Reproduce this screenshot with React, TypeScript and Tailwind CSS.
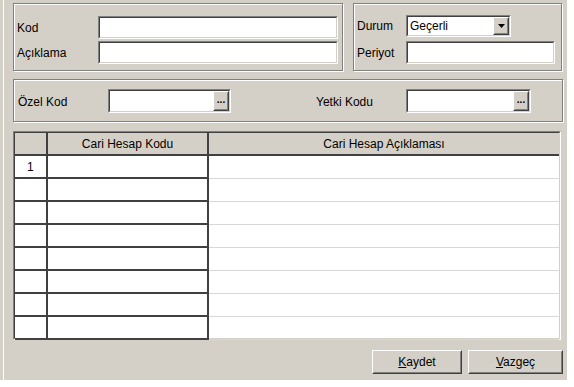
import React from 'react';

const font = { fontFamily: '"Liberation Sans", Arial, sans-serif' };

// Windows-classic sunken edit frame
const Sunken: React.FC<{ className?: string; children?: React.ReactNode }> = ({ className = '', children }) => (
  <div className={`border border-t-[#808080] border-l-[#808080] border-b-white border-r-white ${className}`}>
    <div className="h-full w-full border border-t-[#404040] border-l-[#404040] border-b-[#d4d0c8] border-r-[#d4d0c8] bg-white flex items-center">
      {children}
    </div>
  </div>
);

const Raised: React.FC<{ className?: string; children?: React.ReactNode }> = ({ className = '', children }) => (
  <div className={`border border-t-white border-l-white border-b-[#404040] border-r-[#404040] bg-[#d4d0c8] ${className}`}>
    <div className="h-full w-full border border-t-[#d4d0c8] border-l-[#d4d0c8] border-b-[#808080] border-r-[#808080] flex items-center justify-center">
      {children}
    </div>
  </div>
);

const Group: React.FC<{ className?: string; children?: React.ReactNode }> = ({ className = '', children }) => (
  <div className={`border border-[#808080] shadow-[inset_1px_1px_0_#fff,1px_1px_0_#fff] ${className}`}>{children}</div>
);

const Lookup: React.FC<{ className?: string }> = ({ className = '' }) => (
  <Sunken className={className}>
    <div className="flex-1" />
    <Raised className="w-[16px] h-full">
      <span className="text-[10px] font-bold leading-none -mt-[3px]">...</span>
    </Raised>
  </Sunken>
);

const rows = Array.from({ length: 8 }, (_, i) => i);

export default function App() {
  return (
    <div className="w-[574px] h-[387px] bg-white text-[12px] text-black" style={font}>
      <div className="w-[567px] h-[380px] bg-[#d4d0c8] pl-[3px]">
        <div className="h-full border-l border-white pl-[9px] pt-[3px] flex flex-col">
          {/* top groups */}
          <div className="flex gap-[10px]">
            <Group className="w-[330px] h-[68px] pl-[3px] pt-[12px] pr-[4px] flex flex-col gap-[2px]">
              <div className="flex items-center">
                <span className="w-[81px]">Kod</span>
                <Sunken className="w-[240px] h-[23px]" />
              </div>
              <div className="flex items-center">
                <span className="w-[81px]">Açıklama</span>
                <Sunken className="w-[240px] h-[23px]" />
              </div>
            </Group>
            <Group className="w-[209px] h-[68px] pl-[3px] pt-[11px] flex flex-col gap-[4px]">
              <div className="flex items-center">
                <span className="w-[49px]">Durum</span>
                <Sunken className="w-[105px] h-[22px]">
                  <span className="flex-1 pl-[2px]">Geçerli</span>
                  <Raised className="w-[16px] h-full">
                    <svg width="7" height="4" viewBox="0 0 7 4"><path d="M0 0h7L3.5 4z" fill="#000" /></svg>
                  </Raised>
                </Sunken>
              </div>
              <div className="flex items-center">
                <span className="w-[49px]">Periyot</span>
                <Sunken className="w-[149px] h-[23px]" />
              </div>
            </Group>
          </div>

          {/* codes group */}
          <Group className="mt-[8px] w-[550px] h-[43px] pl-[4px] flex items-center">
            <span className="w-[90px] mt-[3px]">Özel Kod</span>
            <Lookup className="w-[123px] h-[24px] mt-[1px]" />
            <span className="ml-[85px] w-[90px] mt-[3px]">Yetki Kodu</span>
            <Lookup className="w-[125px] h-[24px] mt-[1px]" />
          </Group>

          {/* grid */}
          <div className="mt-[9px] w-[548px] h-[209px] border border-t-[#808080] border-l-[#808080] border-b-white border-r-white">
            <div className="h-full border border-t-[#404040] border-l-[#404040] border-b-[#d4d0c8] border-r-[#d4d0c8] bg-white">
              <div className="grid grid-cols-[33px_161px_1fr] grid-rows-[23px] auto-rows-[23px]">
                <div className="bg-[#d4d0c8] border-r-2 border-b-2 border-[#404040]" />
                <div className="bg-[#d4d0c8] border-r-2 border-b-2 border-[#404040] flex items-center justify-center">Cari Hesap Kodu</div>
                <div className="bg-[#d4d0c8] border-b-2 border-[#404040] flex items-center justify-center">Cari Hesap Açıklaması</div>
                {rows.map((i) => (
                  <React.Fragment key={i}>
                    <div className="border-r-2 border-b-2 border-[#404040] flex items-center pl-[12px]">{i === 0 ? '1' : ''}</div>
                    <div className="border-r-2 border-b-2 border-[#404040]" />
                    <div className="border-b border-[#d8d8d8]" />
                  </React.Fragment>
                ))}
              </div>
            </div>
          </div>

          {/* buttons */}
          <div className="mt-[10px] w-[550px] flex justify-end gap-[6px]">
            <Raised className="w-[90px] h-[24px]">
              <span><span className="underline">K</span>aydet</span>
            </Raised>
            <Raised className="w-[95px] h-[24px]">
              <span><span className="underline">V</span>azgeç</span>
            </Raised>
          </div>
        </div>
      </div>
    </div>
  );
}
